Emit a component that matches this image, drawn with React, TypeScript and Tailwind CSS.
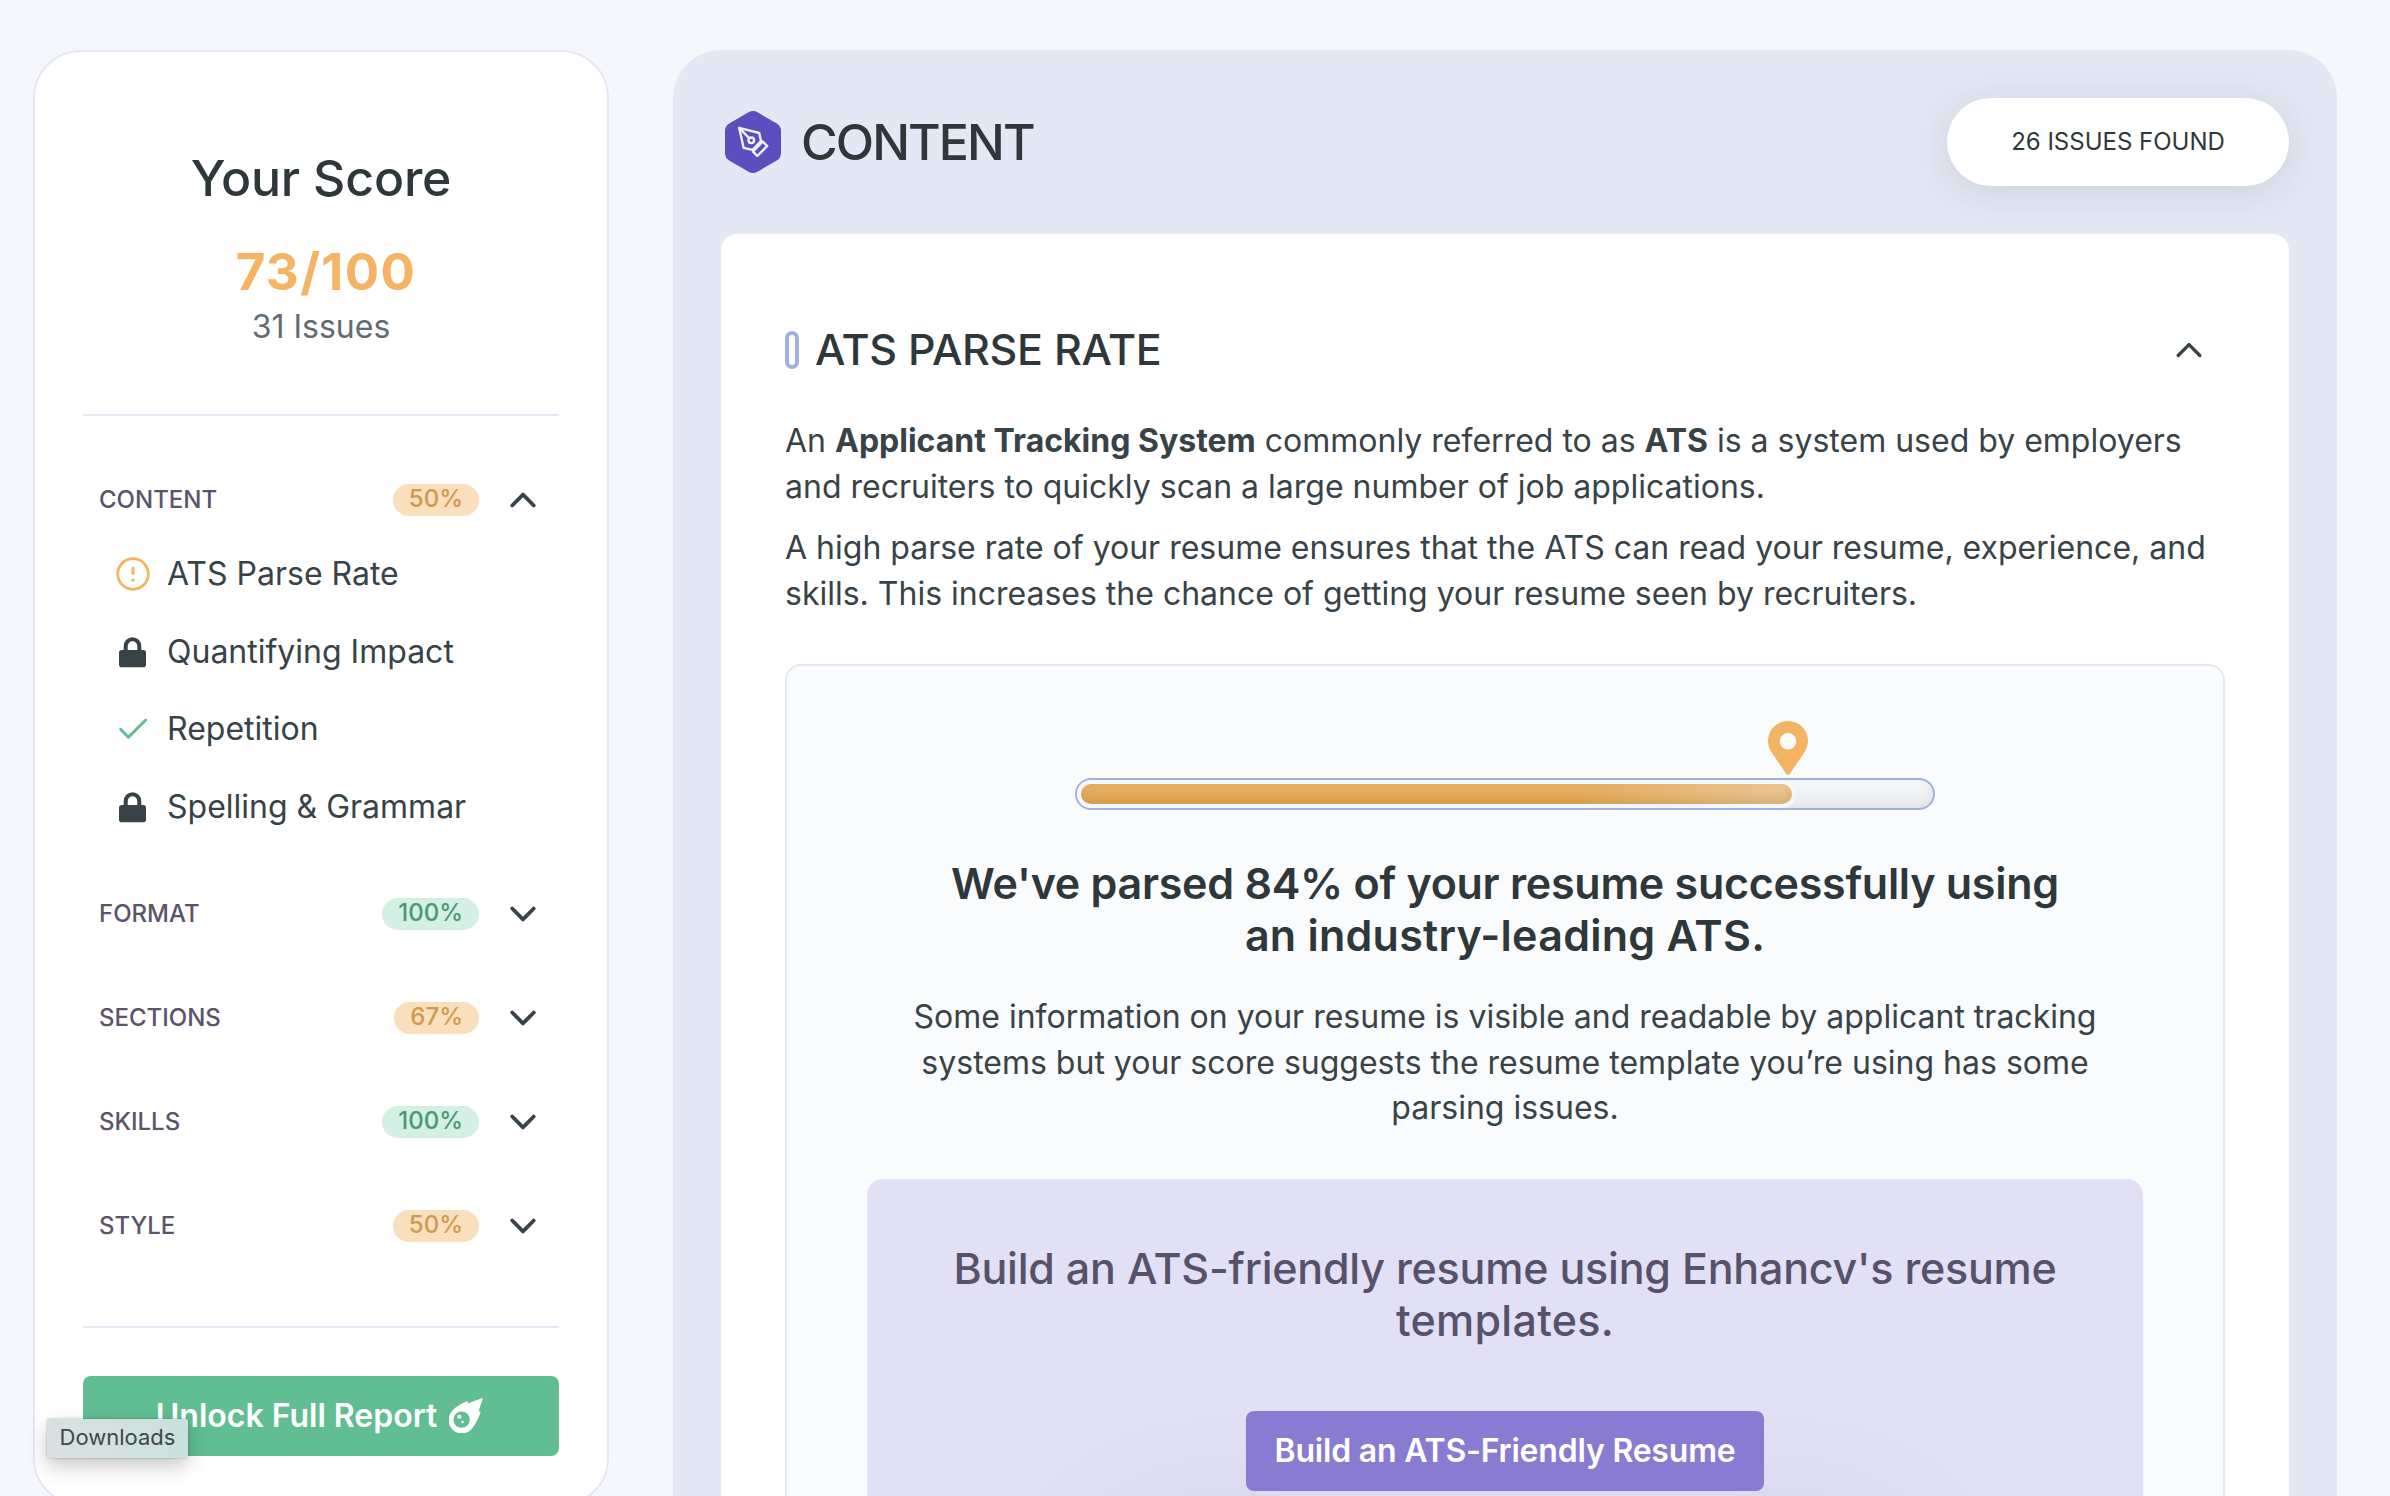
import type { ReactNode } from "react";

function Chevron({ up = false, thin = false }: { up?: boolean; thin?: boolean }) {
  return (
    <svg viewBox="0 0 32 32" className="size-8 shrink-0" fill="none" stroke="#384347" strokeLinecap="round" strokeLinejoin="round" strokeWidth={thin ? 3.4 : 3.8}>
      <path d={up ? "M5.2 21.5 16 10.6 26.8 21.5" : "M5.2 10.5 16 21.4 26.8 10.5"} />
    </svg>
  );
}

function AlertIcon() {
  return (
    <svg viewBox="0 0 34 34" className="size-[34px] shrink-0" fill="none" stroke="#f4b464" strokeWidth="2.8" strokeLinecap="round">
      <circle cx="17" cy="17" r="15.3" />
      <path d="M17 11v5.6" strokeWidth="3" />
      <circle cx="17" cy="23.2" r="1.6" fill="#f4b464" stroke="none" />
    </svg>
  );
}

function LockIcon() {
  return (
    <svg viewBox="0 0 34 34" className="size-[34px] shrink-0">
      <path d="M9.7 17v-5.8a6.8 7 0 0 1 13.6 0V17" fill="none" stroke="#384347" strokeWidth="4" />
      <rect x="3" y="15" width="27" height="17.2" rx="2.8" fill="#384347" />
    </svg>
  );
}

function CheckIcon() {
  return (
    <svg viewBox="0 0 34 34" className="size-[34px] shrink-0" fill="none" stroke="#5fbd92" strokeWidth="2.9" strokeLinecap="round" strokeLinejoin="round">
      <path d="M4.6 17.2 12.4 25.2 29.7 8" />
    </svg>
  );
}

function CometIcon() {
  return (
    <svg viewBox="0 0 34 35" className="h-[35px] w-[34px] shrink-0">
      <path
        fill="#fff"
        d="M3.2 12.8C7.5 8 13 5 18.2 3.2q.8-.2.8.6l-.3 1.6L32.8.2q1.2-.3.9.9L29.6 13.3l1.4.3q.8.3.5 1.1C29.5 20 27 25.5 23.4 30A13 13 0 0 1 3.2 31.2 13.4 13.4 0 0 1 3.2 12.8Z"
      />
      <circle cx="12.6" cy="21.6" r="8.2" fill="#61bd92" />
      <circle cx="10.4" cy="18.8" r="2.1" fill="#fff" />
      <circle cx="13.6" cy="24" r="1.2" fill="#fff" />
    </svg>
  );
}

function PenBadge() {
  return (
    <svg viewBox="0 0 56 62" className="h-[62px] w-14 shrink-0">
      <path
        fill="#5d4ec0"
        d="M23.5 1.3a9 9 0 0 1 9 0L51.4 12.2a9 9 0 0 1 4.6 7.8V42a9 9 0 0 1-4.6 7.8L32.5 60.7a9 9 0 0 1-9 0L4.6 49.8A9 9 0 0 1 0 42V20a9 9 0 0 1 4.6-7.8Z"
      />
      <g fill="none" stroke="#f1effa" strokeWidth="2.4" strokeLinejoin="round" strokeLinecap="round">
        <path d="M14.2 16.9 34.2 22 36 30 27.6 38.8 18.6 36.8Z" />
        <path d="M14.2 16.9 24 27" />
        <circle cx="26.3" cy="29.3" r="2.8" />
        <path d="M37.8 30.5 42.2 35 32.3 45 28 40.6Z" />
      </g>
    </svg>
  );
}

function Badge({ tone, children }: { tone: "orange" | "green"; children: ReactNode }) {
  const color = tone === "orange" ? "bg-[#f9dfbb] text-[#cf9a50]" : "bg-[#d4efe3] text-[#4a9873]";
  return <span className={`rounded-full px-4 pb-0.5 text-2xl leading-[30px] font-medium ${color}`}>{children}</span>;
}

function SectionRow({ label, score, tone, open = false }: { label: string; score: string; tone: "orange" | "green"; open?: boolean }) {
  return (
    <div className={`flex items-center pr-5 pl-4 ${open ? "h-[72px]" : "h-[104px]"}`}>
      <span className="flex-1 text-2xl font-medium text-[#5a546a]">{label}</span>
      <Badge tone={tone}>{score}</Badge>
      <span className="ml-7"><Chevron up={open} /></span>
    </div>
  );
}

const checks = [
  { label: "ATS Parse Rate", icon: <AlertIcon /> },
  { label: "Quantifying Impact", icon: <LockIcon /> },
  { label: "Repetition", icon: <CheckIcon /> },
  { label: "Spelling & Grammar", icon: <LockIcon /> },
];

function Sidebar() {
  return (
    <aside className="relative w-[576px] shrink-0 self-start rounded-[48px] border-2 border-[#e4e8f4] bg-white px-12 pt-24 pb-12">
      <h2 className="text-center text-[50px] leading-[60px] font-medium tracking-[-0.2px] text-[#2e373a]">Your Score</h2>
      <p className="mt-[34px] pl-2.5 text-center text-[51px] leading-[60px] font-bold tracking-[1.4px] text-[#f4b464]">73/100</p>
      <p className="mt-0.5 text-center text-[32px] leading-[46px] text-[#626c70]">31 Issues</p>
      <div className="mt-16 mb-12 h-0.5 bg-[#e4e8f4]" />
      <SectionRow label="CONTENT" score="50%" tone="orange" open />
      <ul className="-mt-px mb-[16.2px]">
        {checks.map((c) => (
          <li key={c.label} className="flex h-[77.7px] items-center gap-[17px] pl-[33px] text-[32px] text-[#384347]">
            {c.icon}
            {c.label}
          </li>
        ))}
      </ul>
      <SectionRow label="FORMAT" score="100%" tone="green" />
      <SectionRow label="SECTIONS" score="67%" tone="orange" />
      <SectionRow label="SKILLS" score="100%" tone="green" />
      <SectionRow label="STYLE" score="50%" tone="orange" />
      <div className="my-12 h-0.5 bg-[#e4e8f4]" />
      <button className="flex h-20 w-full items-center justify-center gap-3 rounded-lg bg-[#61bd92] pr-[3px] text-[32px] font-semibold text-white">
        Unlock Full Report
        <CometIcon />
      </button>
      <div className="absolute top-[1367px] left-3 flex h-[39px] w-[141px] items-center justify-center rounded-xs bg-linear-to-r from-[#d9e1e2] to-[#cbe1de] pb-0.5 text-[22px] text-[#414847] shadow-[0_8px_20px_rgba(0,0,0,0.22),0_0_2px_rgba(0,0,0,0.35)]">
        Downloads
      </div>
    </aside>
  );
}

function ParseBar() {
  return (
    <div className="mx-auto w-[860px]">
      <div className="h-[57px]">
        <svg viewBox="0 0 40 54" className="ml-[693px] h-[54px] w-10">
          <path fill="#f4b464" fillRule="evenodd" d="M20 0a20 20 0 0 1 20 20c0 5-1.8 8.6-4 12L21.6 53.2a2 2 0 0 1-3.2 0L4 32c-2.2-3.4-4-7-4-12A20 20 0 0 1 20 0Zm0 12a8.3 8.3 0 1 0 0 16.6 8.3 8.3 0 0 0 0-16.6Z" />
        </svg>
      </div>
      <div className="h-8 overflow-hidden rounded-full border-2 border-[#9fb1dc] bg-linear-to-b from-[#f6f7fb] to-[#e9ebec] shadow-[inset_-4px_-2px_8px_rgba(0,0,0,0.04)]">
        <div className="h-full w-[84%] rounded-r-full bg-[#f6f7fd] p-1">
          <div className="h-full rounded-full bg-linear-to-r from-[#e6ad5f] from-70% to-[#ebc796] shadow-[inset_-2px_-6px_10px_rgba(160,100,20,0.22)]" />
        </div>
      </div>
    </div>
  );
}

function ParseResult() {
  return (
    <div className="mt-[47px] rounded-2xl border-2 border-[#e4e8f4] bg-[#fafbfd] px-20 pt-[55px] text-center">
      <ParseBar />
      <h4 className="mt-[47px] text-[43px] leading-[52px] font-semibold tracking-[-0.27px] text-[#2e373a]">
        We've parsed 84% of your resume successfully using
        <br />
        <span className="tracking-[0.25px]">an industry-leading ATS.</span>
      </h4>
      <p className="mt-[33px] text-[32px] leading-[45.7px] text-[#384347]">
        Some information on your resume is visible and readable by applicant tracking
        <br />
        systems but your score suggests the resume template you’re using has some
        <br />
        parsing issues.
      </p>
      <div className="mt-12 overflow-hidden rounded-2xl bg-[#e2e0f4] pt-[63px]">
        <h4 className="text-[43px] leading-[52px] font-[450] tracking-[-0.22px] text-[#57526a]">
          Build an ATS-friendly resume using Enhancv's resume
          <br />
          <span className="tracking-[0.3px]">templates.</span>
        </h4>
        <button className="mt-[65px] h-20 w-[518px] rounded-lg bg-[#887bd1] text-[32px] font-semibold tracking-[-0.2px] text-white">
          Build an ATS-Friendly Resume
        </button>
        <div className="mx-auto mt-14 h-[500px] w-[760px] bg-white shadow-[0_0_140px_rgba(60,60,60,0.12)]" />
      </div>
    </div>
  );
}

export default function App() {
  return (
    <div className="flex h-[1496px] w-[2390px] gap-16 overflow-hidden bg-[#f6f7fd] pt-[50px] pl-[33px] font-['Inter',sans-serif]">
      <Sidebar />
      <main className="w-[1664px] shrink-0 self-start rounded-[48px] bg-[#e4e8f4] p-12">
        <header className="flex h-[88px] items-center pl-1">
          <PenBadge />
          <h1 className="ml-5 flex-1 text-[50px] font-medium tracking-[-1.9px] text-[#2e373a]">CONTENT</h1>
          <div className="flex h-[88px] w-[342px] items-center justify-center rounded-full bg-white text-2xl text-[#2e373a] shadow-[0_6px_40px_rgba(70,75,100,0.15)]">
            26 ISSUES FOUND
          </div>
        </header>
        <section className="mt-12 rounded-2xl bg-white px-16 pt-[84px] pb-16 text-[32px] leading-[45.7px] text-[#384347]">
          <div className="flex h-16 items-center pr-5">
            <span className="h-[38px] w-3.5 rounded-full border-4 border-[#9fb1dc]" />
            <h3 className="ml-4 flex-1 text-[43px] font-[450] tracking-[-0.3px] text-[#2e373a]">ATS PARSE RATE</h3>
            <Chevron up thin />
          </div>
          <p className="mt-9">
            An <b className="font-bold">Applicant Tracking System</b> commonly referred to as <b className="font-bold">ATS</b> is a system used by employers
            <br />
            and recruiters to quickly scan a large number of job applications.
          </p>
          <p className="mt-4">
            A high parse rate of your resume ensures that the ATS can read your resume, experience, and
            <br />
            skills. This increases the chance of getting your resume seen by recruiters.
          </p>
          <ParseResult />
        </section>
      </main>
    </div>
  );
}
